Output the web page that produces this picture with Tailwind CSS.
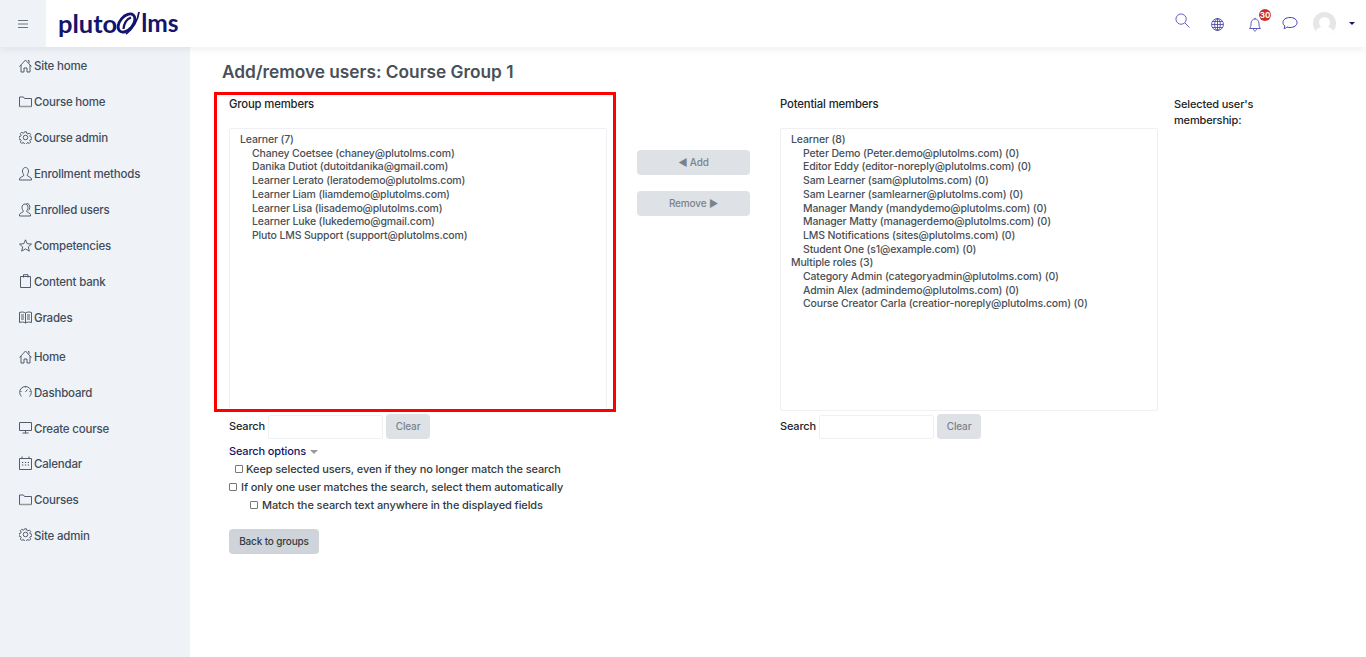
<!DOCTYPE html>
<html>
<head>
<meta charset="utf-8">
<script src="https://cdn.jsdelivr.net/npm/@tailwindcss/browser@4"></script>
</head>
<body class="bg-white font-['Inter',sans-serif] text-[#495057] overflow-hidden">
<div class="relative w-[1366px] h-[657px] overflow-hidden">
  <header class="relative z-10 flex items-center h-[47px] bg-white shadow-[0_2px_8px_rgba(0,0,0,0.07)]">
    <div class="flex items-center justify-center w-[46px] h-full pr-[1px] bg-[#eff3f8]">
      <svg width="12" height="10" viewBox="0 0 12 10" fill="none" stroke="#6c757d" stroke-width="1"><path d="M1 1.500h10M1 5h10M1 8.500h10"/></svg>
    </div>
    <div class="flex items-center ml-[12px] font-['Lato',sans-serif] font-bold text-[25.500px] leading-none text-[#14146e]">
      <span>pluto</span>
      <svg width="24" height="27" viewBox="0 0 24 27" fill="none" stroke="#14146e" class="ml-[-1px] mr-[1px] mt-[-3px]"><ellipse cx="10.500" cy="14" rx="10.500" ry="6.500" transform="rotate(-50 10.500 14)" stroke-width="2.800"/><path d="M7.500 20C8 14 11 10 15 8.500" stroke-width="2.200"/><path d="M23 3C22 11 17 20 10 25" stroke-width="1.800"/></svg>
      <span class="text-[24.500px]">lms</span>
    </div>
    <div class="ml-auto flex items-center mr-[11px]">
      <svg class="mr-[21px] mt-[-6px]" width="15" height="15" viewBox="0 0 16 16" fill="none" stroke="#5a5ab8" stroke-width="1"><circle cx="6.500" cy="6.500" r="5.500"/><path d="M10.500 10.500l5 5"/></svg>
      <svg class="mr-[24px] mt-[1px]" width="13" height="13" viewBox="0 0 16 16" fill="none" stroke="#3d3da8" stroke-width="1"><circle cx="8" cy="8" r="7.300"/><ellipse cx="8" cy="8" rx="3.500" ry="7.300"/><path d="M8 .7v14.600M.7 8h14.600M1.800 4.300h12.400M1.800 11.700h12.400"/></svg>
      <div class="relative mr-[20px]">
        <svg class="mt-[1px]" width="14" height="15" viewBox="0 0 14 15" fill="none" stroke="#5a5ab8" stroke-width="1"><path d="M1.500 11.500c1-1 1.500-2 1.500-5 0-2.500 1.700-4.500 4-4.500s4 2 4 4.500c0 3 .5 4 1.500 5zM7 2V.7M5.500 12c0 1 .7 2 1.500 2s1.500-1 1.500-2"/></svg>
        <span class="absolute top-[-7px] left-[11px] flex items-center justify-center w-[12px] h-[12px] rounded-full bg-[#c9302c] text-white text-[8px] font-bold leading-none">30</span>
      </div>
      <svg class="mr-[15px] mt-[-1px]" width="16" height="15" viewBox="0 0 16 15" fill="none" stroke="#3d3da8" stroke-width="1"><path d="M8 1.500c4 0 7 2 7 5s-3 5-7 5c-1 0-2-.2-3-.5-.7.8-2 1.500-3 1.500.5-.8.8-1.700.8-2.700C1.800 9.500 1 8 1 6.500c0-3 3-5 7-5z"/></svg>
      <div class="relative flex justify-center w-[23px] h-[23px] rounded-full bg-[#e6e6e6] overflow-hidden mr-[13px]">
        <span class="absolute top-[5px] w-[11px] h-[11px] rounded-full bg-white"></span>
        <span class="absolute top-[15px] w-[19px] h-[14px] rounded-full bg-white"></span>
      </div>
      <span class="w-0 h-0 border-x-[3px] border-x-transparent border-t-[3px] border-t-[#14146e]"></span>
    </div>
  </header>

  <div class="flex h-[610px]">
    <nav class="w-[190px] h-full shrink-0 bg-[#eff3f8] pt-[2px] text-[11.500px] tracking-[-0.2px] font-medium text-[#434c5c]">
      <a class="flex items-center h-9 pl-[19px] gap-[2px]"><svg class="mt-[-3px]" width="13" height="14" viewBox="0 0 13 14" fill="none" stroke="#434c5c" stroke-width=".9"><path d="M.5 7.500 6.500 1l6 6.500M2 6v7h3V9h3v4h3V6M10 4V1.500H9"/></svg>Site home</a>
      <a class="flex items-center h-9 pl-[19px] gap-[2px]"><svg class="mt-[-3px]" width="13" height="13" viewBox="0 0 13 13" fill="none" stroke="#434c5c" stroke-width=".9"><path d="M.5 11.500V2h4l1 1.500h7v8z"/><path d="M1 11.500h11.500" stroke="#999" stroke-width="1.500"/></svg>Course home</a>
      <a class="flex items-center h-9 pl-[19px] gap-[2px]"><svg class="mt-[-4px]" width="13" height="13" viewBox="0 0 16 16" fill="none" stroke="#434c5c" stroke-width="1.100"><circle cx="8" cy="8" r="2.800"/><path d="M6.800 1h2.400l.4 2 1.300.6 1.800-1.100 1.700 1.700-1.100 1.800.6 1.300 2 .4v2.400l-2 .4-.6 1.300 1.100 1.800-1.700 1.700-1.800-1.100-1.300.6-.4 2H6.800l-.4-2-1.300-.6-1.800 1.100-1.700-1.700 1.100-1.800-.6-1.300-2-.4V6.800l2-.4.6-1.300-1.100-1.800 1.700-1.700 1.800 1.100 1.300-.6z"/></svg>Course admin</a>
      <a class="flex items-center h-9 pl-[19px] gap-[2px]"><svg class="mt-[-3px]" width="13" height="14" viewBox="0 0 13 14" fill="none" stroke="#434c5c" stroke-width=".9"><path d="M3.500 4c0-2 1.300-3.500 3-3.500s3 1.500 3 3.500c0 2-1 3.500-1.500 4 0 1.500 4.500 2 4.500 4v1H.5v-1c0-2 4.500-2.500 4.500-4C4.500 7.500 3.500 6 3.500 4z"/></svg>Enrollment methods</a>
      <a class="flex items-center h-9 pl-[19px] gap-[2px]"><svg class="mt-[-3px]" width="13" height="14" viewBox="0 0 13 14" fill="none" stroke="#434c5c" stroke-width=".9"><path d="M3 4.500c0-2 1.300-3.500 3-3.500s3 1.500 3 3.500c0 1.800-1 3-1.500 3.500 0 1.500 4 2 4 3.500v1.500H.5v-1.500C.5 10 4.500 9.500 4.500 8 4 7.500 3 6.300 3 4.500z"/><path d="M7.500.5c2.500 0 3.500 2 3.300 4-.1 1.500-.8 2.500-1.300 3"/></svg>Enrolled users</a>
      <a class="flex items-center h-9 pl-[19px] gap-[2px]"><svg class="mt-[-3px]" width="13" height="13" viewBox="0 0 13 13" fill="none" stroke="#434c5c" stroke-width=".9"><path d="M6.500.8 8.200 4.700l4.300.4-3.200 2.800 1 4.200-3.800-2.200-3.800 2.200 1-4.200L.5 5.100l4.300-.4z"/></svg>Competencies</a>
      <a class="flex items-center h-9 pl-[19px] gap-[2px]"><svg class="mt-[-4px]" width="13" height="14" viewBox="0 0 13 14" fill="none" stroke="#434c5c" stroke-width=".9"><path d="M2 2.500h9.500v11H1.500v-11zM4.500 3.500V.7h4.500v2.800"/></svg>Content bank</a>
      <a class="flex items-center h-9 pl-[19px] gap-[2px]"><svg class="mt-[-4px]" width="13" height="13" viewBox="0 0 13 13" fill="none" stroke="#434c5c" stroke-width=".9"><path d="M.5 1.500c2-.7 4.500-.7 6 .5 1.500-1.200 4-1.200 6-.5v10c-2-.7-4.500-.7-6 .5-1.500-1.200-4-1.200-6-.5zM6.500 2v10M2 4h3M2 6h3M2 8h3M8 4h3M8 6h3M8 8h3"/></svg>Grades</a>
      <a class="flex items-center h-9 mt-[3px] pl-[19px] gap-[2px]"><svg class="mt-[-3px]" width="13" height="14" viewBox="0 0 13 14" fill="none" stroke="#434c5c" stroke-width=".9"><path d="M.5 7.500 6.500 1l6 6.500M2 6v7h3V9h3v4h3V6M10 4V1.500H9"/></svg>Home</a>
      <a class="flex items-center h-[35.600px] pl-[19px] gap-[2px]"><svg class="mt-[-4px]" width="13" height="13" viewBox="0 0 13 13" fill="none" stroke="#434c5c" stroke-width=".9"><path d="M2.500 11.500a5.800 5.800 0 1 1 8 0"/><path d="M6.500 6.800 8.500 4.500M6.500 1.500v1M1.500 6.500h1M10.500 6.500h1" stroke-width="1"/></svg>Dashboard</a>
      <a class="flex items-center h-[35.600px] pl-[19px] gap-[2px]"><svg class="mt-[-3px]" width="13" height="13" viewBox="0 0 13 13" fill="none" stroke="#434c5c" stroke-width=".9"><path d="M.5 1.500h12v8H.5zM6.500 9.500v2.500M3.500 12h6"/></svg>Create course</a>
      <a class="flex items-center h-[35.600px] pl-[19px] gap-[2px]"><svg class="mt-[-3px]" width="13" height="14" viewBox="0 0 13 14" fill="none" stroke="#434c5c" stroke-width=".9"><path d="M.5 2.500h12v11H.5zM3 .5v2M10 .5v2"/><path d="M3 6.500h1.200M5.900 6.500h1.200M8.800 6.500H10M3 9h1.200M5.900 9h1.200M8.800 9H10" stroke-width="1.100"/></svg>Calendar</a>
      <a class="flex items-center h-[35.600px] pl-[19px] gap-[2px]"><svg class="mt-[-3px]" width="13" height="13" viewBox="0 0 13 13" fill="none" stroke="#434c5c" stroke-width=".9"><path d="M.5 11.500V2h4l1 1.500h7v8z"/><path d="M1 11.500h11.500" stroke="#999" stroke-width="1.500"/></svg>Courses</a>
      <a class="flex items-center h-[35.600px] pl-[19px] gap-[2px]"><svg class="mt-[-4px]" width="13" height="13" viewBox="0 0 16 16" fill="none" stroke="#434c5c" stroke-width="1.100"><circle cx="8" cy="8" r="2.800"/><path d="M6.800 1h2.400l.4 2 1.300.6 1.800-1.100 1.700 1.700-1.100 1.800.6 1.300 2 .4v2.400l-2 .4-.6 1.300 1.100 1.800-1.700 1.700-1.800-1.100-1.300.6-.4 2H6.800l-.4-2-1.300-.6-1.800 1.100-1.700-1.700 1.100-1.800-.6-1.300-2-.4V6.800l2-.4.6-1.300-1.100-1.800 1.700-1.700 1.800 1.100 1.300-.6z"/></svg>Site admin</a>
    </nav>

    <main class="relative flex-1 pt-[14px] pl-[32px]">
      <h2 class="h-[22px] text-[17.300px] leading-[22px] font-semibold text-[#495057]">Add/remove users: Course Group 1</h2>
      <div class="grid grid-cols-[378px_173px_378px_150px] ml-[7px] mt-[13px] text-[10.500px] tracking-[-0.15px] font-medium">
        <div>
          <div class="h-[32px] text-[11.300px] text-[#212529]">Group members</div>
          <div class="h-[283px] border border-[#eef0f3] rounded-[2px] pl-[10px] pt-[4px] leading-[13.700px]">
            <div>Learner (7)</div>
            <ul class="pl-[12px]">
              <li>Chaney Coetsee (chaney@plutolms.com)</li>
              <li>Danika Dutiot (dutoitdanika@gmail.com)</li>
              <li>Learner Lerato (leratodemo@plutolms.com)</li>
              <li>Learner Liam (liamdemo@plutolms.com)</li>
              <li>Learner Lisa (lisademo@plutolms.com)</li>
              <li>Learner Luke (lukedemo@gmail.com)</li>
              <li>Pluto LMS Support (support@plutolms.com)</li>
            </ul>
          </div>
          <div class="flex items-center mt-[3px] h-[25px] gap-[3px] text-[11px] text-[#212529]">
            <span>Search</span>
            <span class="w-[115px] h-[24px] border border-[#eef0f3] rounded-[2px] bg-white"></span>
            <span class="flex items-center justify-center w-[44px] h-[25px] rounded-[4px] bg-[#dee2e6] text-[#7b838a] text-[10px]">Clear</span>
          </div>
          <div class="mt-[5px] text-[11px] leading-[15px] text-[#14146e] flex items-center">Search options<span class="ml-[4px] mt-[1px] w-0 h-0 border-x-[4px] border-x-transparent border-t-[4px] border-t-[#999]"></span></div>
          <div class="mt-[1px] flex flex-col text-[#343a40] text-[11px] tracking-[-0.1px] leading-[18px]">
            <label class="flex items-center pl-[6px] gap-[3px]"><span class="w-[8px] h-[8px] border border-[#777] rounded-[1px] bg-white"></span>Keep selected users, even if they no longer match the search</label>
            <label class="flex items-center gap-[4px]"><span class="w-[8px] h-[8px] border border-[#777] rounded-[1px] bg-white"></span>If only one user matches the search, select them automatically</label>
            <label class="flex items-center pl-[21px] gap-[4px]"><span class="w-[8px] h-[8px] border border-[#777] rounded-[1px] bg-white"></span>Match the search text anywhere in the displayed fields</label>
          </div>
          <div class="flex items-center justify-center w-[90px] h-[25px] mt-[15px] rounded-[4px] bg-[#ced4da] text-[10px] text-[#343a40]">Back to groups</div>
        </div>

        <div class="pl-[30px] pt-[54px] text-[10px] text-[#7b838a]">
          <div class="flex items-center justify-center w-[113px] h-[25px] rounded-[4px] bg-[#dee2e6]">◀ Add</div>
          <div class="flex items-center justify-center w-[113px] h-[25px] mt-[16px] rounded-[4px] bg-[#dee2e6]">Remove ▶</div>
        </div>

        <div>
          <div class="h-[32px] text-[11.300px] text-[#212529]">Potential members</div>
          <div class="h-[283px] border border-[#eef0f3] rounded-[2px] pl-[10px] pt-[4px] leading-[13.700px]">
            <div>Learner (8)</div>
            <ul class="pl-[12px]">
              <li>Peter Demo (Peter.demo@plutolms.com) (0)</li>
              <li>Editor Eddy (editor-noreply@plutolms.com) (0)</li>
              <li>Sam Learner (sam@plutolms.com) (0)</li>
              <li>Sam Learner (samlearner@plutolms.com) (0)</li>
              <li>Manager Mandy (mandydemo@plutolms.com) (0)</li>
              <li>Manager Matty (managerdemo@plutolms.com) (0)</li>
              <li>LMS Notifications (sites@plutolms.com) (0)</li>
              <li>Student One (s1@example.com) (0)</li>
            </ul>
            <div>Multiple roles (3)</div>
            <ul class="pl-[12px]">
              <li>Category Admin (categoryadmin@plutolms.com) (0)</li>
              <li>Admin Alex (admindemo@plutolms.com) (0)</li>
              <li>Course Creator Carla (creatior-noreply@plutolms.com) (0)</li>
            </ul>
          </div>
          <div class="flex items-center mt-[3px] h-[25px] gap-[3px] text-[11px] text-[#212529]">
            <span>Search</span>
            <span class="w-[115px] h-[24px] border border-[#eef0f3] rounded-[2px] bg-white"></span>
            <span class="flex items-center justify-center w-[44px] h-[25px] rounded-[4px] bg-[#dee2e6] text-[#7b838a] text-[10px]">Clear</span>
          </div>
        </div>

        <div class="pl-[16px] text-[11px] leading-[16px] text-[#212529]">Selected user's<br>membership:</div>
      </div>
      <div class="absolute left-[24px] top-[45px] w-[402px] h-[320px] border-[3px] border-[#ff0000] pointer-events-none"></div>
    </main>
  </div>
</div>
</body>
</html>
